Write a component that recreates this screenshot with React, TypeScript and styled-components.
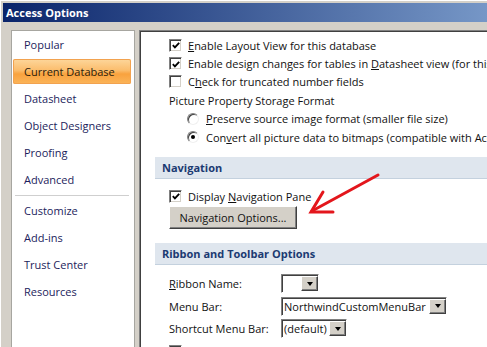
import * as React from 'react'
import styled, { createGlobalStyle } from 'styled-components'

const GlobalStyle = createGlobalStyle`
  html, body {
    margin: 0;
    padding: 0;
    overflow: hidden;
    background: #d4d0c8;
  }
`

const navItems = [
  'Popular',
  'Current Database',
  'Datasheet',
  'Object Designers',
  'Proofing',
  'Advanced',
  '-',
  'Customize',
  'Add-ins',
  'Trust Center',
  'Resources',
]

const Check = ({ checked }: { checked?: boolean }) => (
  <CheckBox>
    {checked && (
      <svg width="11" height="11" viewBox="0 0 11 11">
        <path d="M2 5 L4.3 7.5 L9 2.5" fill="none" stroke="#000" strokeWidth="2" />
      </svg>
    )}
  </CheckBox>
)

const Combo = ({ width, value }: { width: number; value?: string }) => (
  <ComboBox style={{ width }}>
    <ComboValue>{value}</ComboValue>
    <ComboButton>
      <Triangle />
    </ComboButton>
  </ComboBox>
)

const App = () => (
  <Screen>
    <GlobalStyle />
    <TitleBar>Access Options</TitleBar>
    <Body>
      <NavPanel>
        {navItems.map((item, i) =>
          item === '-' ? (
            <Separator key={i} />
          ) : (
            <NavItem key={i} $active={item === 'Current Database'}>
              {item}
            </NavItem>
          )
        )}
      </NavPanel>
      <Content>
        <Row>
          <Check checked />
          <span>
            <u>E</u>nable Layout View for this database
          </span>
        </Row>
        <Row>
          <Check checked />
          <span>
            Enable design changes for tables in <u>D</u>atasheet view (for this database)
          </span>
        </Row>
        <Row>
          <Check />
          <span>
            C<u>h</u>eck for truncated number fields
          </span>
        </Row>
        <Row>Picture Property Storage Format</Row>
        <RadioRow>
          <Radio />
          <span>
            <u>P</u>reserve source image format (smaller file size)
          </span>
        </RadioRow>
        <RadioRow>
          <Radio $selected />
          <span>
            Con<u>v</u>ert all picture data to bitmaps (compatible with Access 2003 and earlier)
          </span>
        </RadioRow>

        <SectionHeader>Navigation</SectionHeader>
        <NavRow>
          <Check checked />
          <span>
            Display <u>N</u>avigation Pane
          </span>
        </NavRow>
        <Button>Navigation Options...</Button>

        <SectionHeader $top={14}>Ribbon and Toolbar Options</SectionHeader>
        <FieldList>
          <Field>
            <FieldLabel>
              <u>R</u>ibbon Name:
            </FieldLabel>
            <Combo width={38} />
          </Field>
          <Field>
            <FieldLabel>Menu Bar:</FieldLabel>
            <Combo width={166} value="NorthwindCustomMenuBar" />
          </Field>
          <Field>
            <FieldLabel>Shortcut Menu Bar:</FieldLabel>
            <Combo width={66} value="(default)" />
          </Field>
          <Field>
            <Check checked />
            <span>Allow Full Menus</span>
          </Field>
        </FieldList>
      </Content>
    </Body>
    <Arrow width="487" height="347" viewBox="0 0 487 347">
      <g stroke="#e3161c" strokeWidth="3" strokeLinecap="round" fill="none">
        <path d="M378 175 L312 211" />
        <path d="M323 192 L311 212 L333 212" />
      </g>
    </Arrow>
  </Screen>
)

export default App

const Screen = styled.div`
  position: relative;
  width: 487px;
  height: 347px;
  overflow: hidden;
  background: #d4d0c8;
  padding: 3px 0 0 3px;
  box-sizing: border-box;
  box-shadow: inset 1px 1px 0 #ffffff;
  font-family: 'Open Sans', 'Noto Sans', sans-serif;
  font-size: 11px;
`

const TitleBar = styled.div`
  height: 19px;
  width: 700px;
  display: flex;
  align-items: center;
  padding-left: 3px;
  box-sizing: border-box;
  background: linear-gradient(to right, #0a246a 0%, #a6caf0 100%);
  color: #ffffff;
  font-weight: 700;
  font-size: 11px;
  white-space: nowrap;
`

const Body = styled.div`
  display: flex;
  align-items: flex-start;
  gap: 4px;
  padding: 8px 0 0 8px;
`

const NavPanel = styled.div`
  flex: none;
  width: 124px;
  height: 340px;
  display: flex;
  flex-direction: column;
  background: #ffffff;
  border: 1px solid #a7a6a0;
  box-sizing: border-box;
`

const NavItem = styled.div<{ $active?: boolean }>`
  height: 25px;
  margin: 1px 3px 1px 1px;
  padding-left: 11px;
  display: flex;
  align-items: center;
  color: #1c1d5c;
  white-space: nowrap;
  border-radius: 2px;
  ${p =>
    p.$active &&
    `
    background: linear-gradient(#fdd79c 0%, #fbbd6d 45%, #f9a23e 60%, #fbb55a 100%);
    box-shadow: inset 0 0 0 1px #f2a24f;
    color: #2a1c0c;
  `}
`

const Separator = styled.div`
  height: 1px;
  margin: 2px 5px 1px 3px;
  background: #cfcfcf;
`

const Content = styled.div`
  flex: none;
  width: 420px;
  height: 340px;
  background: #ffffff;
  border-top: 1px solid #808080;
  border-left: 1px solid #808080;
  box-shadow: inset 1px 1px 0 #404040;
  box-sizing: border-box;
  padding: 5px 0 0 15px;
  color: #111111;
  white-space: nowrap;
`

const Row = styled.div`
  height: 18.4px;
  display: flex;
  align-items: center;
  gap: 6px;
  padding-left: 14px;
`

const RadioRow = styled(Row)`
  padding-left: 32px;
  gap: 7px;
`

const NavRow = styled(Row)`
  height: 18px;
  margin-top: 8px;
`

const CheckBox = styled.span`
  flex: none;
  width: 13px;
  height: 13px;
  box-sizing: border-box;
  background: #ffffff;
  border: 1px solid;
  border-color: #808080 #ffffff #ffffff #808080;
  box-shadow: inset 1px 1px 0 #404040, inset -1px -1px 0 #d4d0c8;
  display: flex;
  align-items: center;
  justify-content: center;
  padding: 1px 0 0 1px;
`

const Radio = styled.span<{ $selected?: boolean }>`
  flex: none;
  position: relative;
  width: 12px;
  height: 12px;
  box-sizing: border-box;
  border-radius: 50%;
  background: #ffffff;
  border: 1px solid;
  border-color: #808080 #f0f0f0 #f0f0f0 #808080;
  box-shadow: inset 1px 1px 0 #404040;
  &::after {
    content: '';
    display: ${p => (p.$selected ? 'block' : 'none')};
    position: absolute;
    left: 3px;
    top: 3px;
    width: 4px;
    height: 4px;
    border-radius: 50%;
    background: #000000;
  }
`

const SectionHeader = styled.div<{ $top?: number }>`
  margin-top: ${p => p.$top ?? 11}px;
  height: 22px;
  box-sizing: border-box;
  padding-left: 7px;
  display: flex;
  align-items: center;
  background: #dfe6ee;
  border-bottom: 1px solid #c4d1de;
  color: #1b3a72;
  font-weight: 700;
`

const Button = styled.div`
  width: 128px;
  height: 23px;
  margin: 1px 0 0 14px;
  box-sizing: border-box;
  display: flex;
  align-items: center;
  justify-content: center;
  background: #d4d0c8;
  border: 1px solid;
  border-color: #ffffff #404040 #404040 #ffffff;
  box-shadow: inset -1px -1px 0 #808080;
  color: #111111;
`

const FieldList = styled.div`
  margin-top: 7px;
  padding-left: 14px;
`

const Field = styled.div`
  height: 22.5px;
  display: flex;
  align-items: center;
  gap: 6px;
`

const FieldLabel = styled.span`
  width: 112px;
  flex: none;
  margin-right: -6px;
`

const ComboBox = styled.div`
  height: 19px;
  box-sizing: border-box;
  display: flex;
  align-items: stretch;
  background: #ffffff;
  border: 1px solid;
  border-color: #808080 #ffffff #ffffff #808080;
  box-shadow: inset 1px 1px 0 #404040;
`

const ComboValue = styled.span`
  flex: 1;
  display: flex;
  align-items: center;
  padding-left: 2px;
  overflow: hidden;
`

const ComboButton = styled.span`
  flex: none;
  width: 17px;
  margin: 1px 0 1px 0;
  box-sizing: border-box;
  background: #d4d0c8;
  border: 1px solid;
  border-color: #ffffff #404040 #404040 #ffffff;
  box-shadow: inset -1px -1px 0 #808080;
  display: flex;
  align-items: center;
  justify-content: center;
`

const Triangle = styled.span`
  width: 0;
  height: 0;
  border-left: 3.5px solid transparent;
  border-right: 3.5px solid transparent;
  border-top: 4px solid #000000;
`

const Arrow = styled.svg`
  position: absolute;
  left: 0;
  top: 0;
  pointer-events: none;
`
